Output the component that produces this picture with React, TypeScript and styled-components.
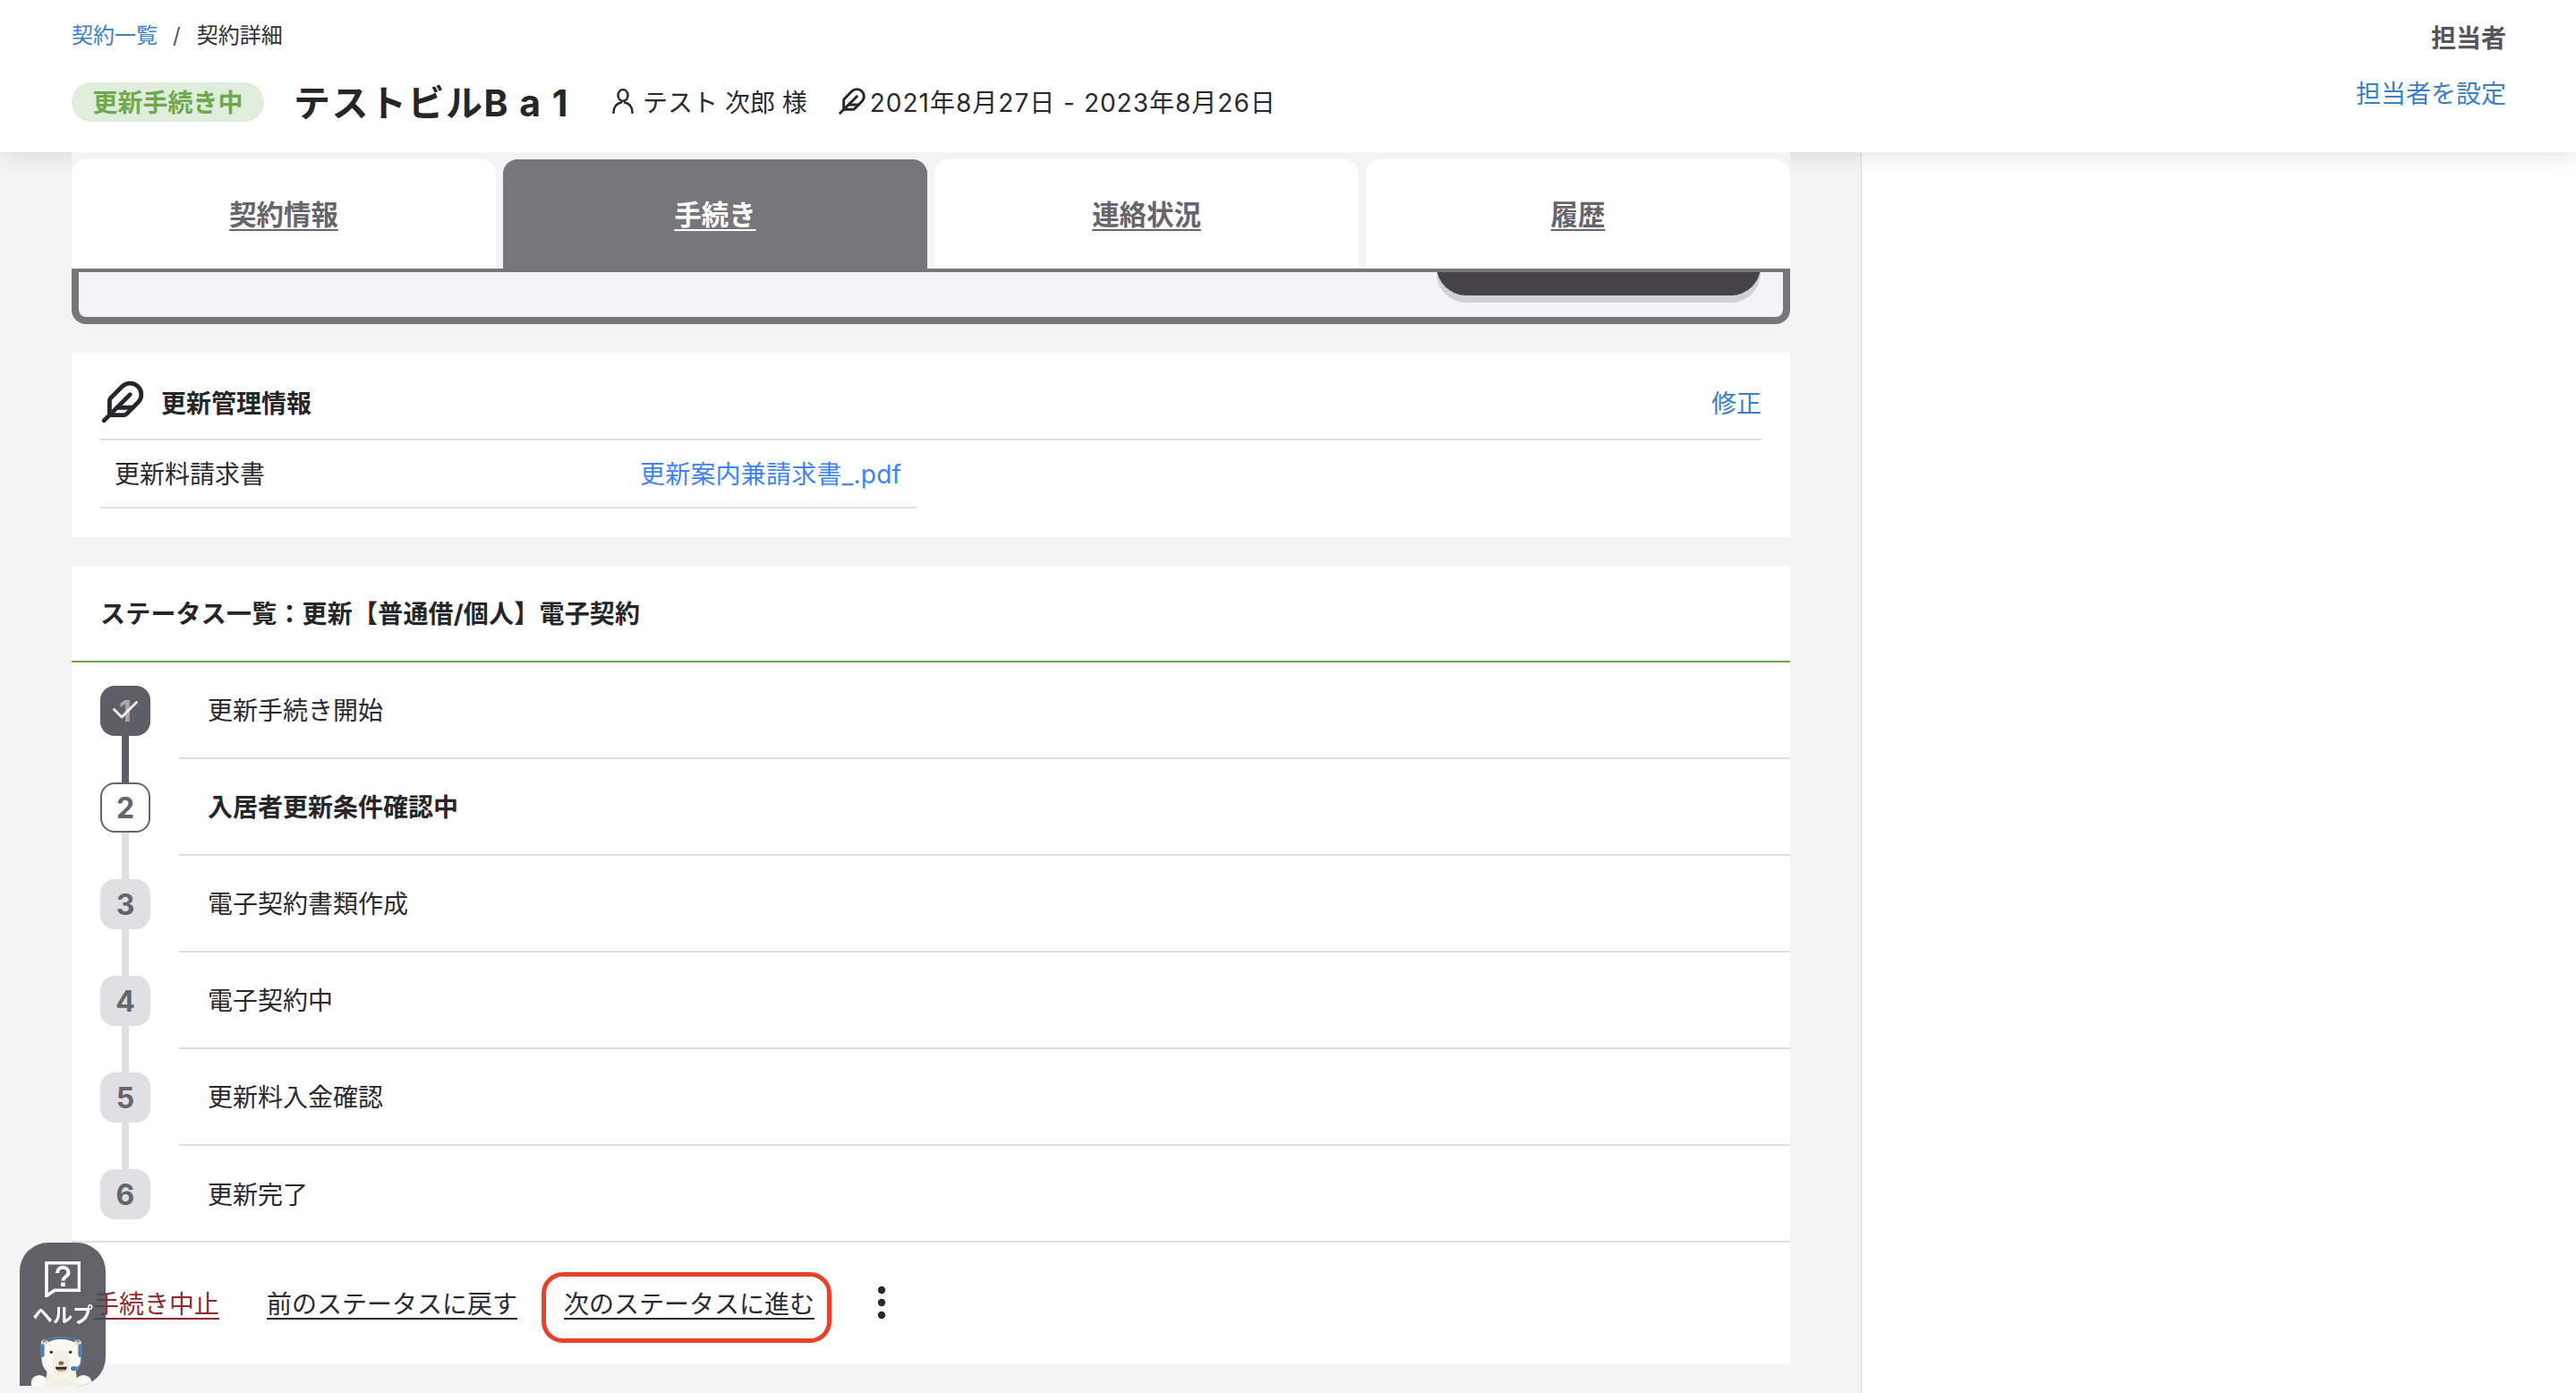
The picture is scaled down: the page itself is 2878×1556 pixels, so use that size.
import React from "react";
import styled, { createGlobalStyle } from "styled-components";
import { Feather } from "lucide-react";

const Global = createGlobalStyle`
  html, body { margin: 0; padding: 0; height: 100%; }
  body {
    background: #f4f4f4;
    font-family: "Inter", "Noto Sans CJK JP", sans-serif;
    color: #2a2a2e;
    overflow: hidden;
  }
  * { box-sizing: border-box; }
`;

const Page = styled.div`
  width: 2878px;
  height: 1556px;
  display: flex;
  flex-direction: column;
  overflow: hidden;
`;

const Header = styled.header`
  height: 170px;
  flex: none;
  background: #fff;
  display: flex;
  justify-content: space-between;
  padding: 24px 78px 0 80px;
  box-shadow: 0 2px 24px rgba(60, 60, 70, 0.16);
  position: relative;
  z-index: 1;
`;

const HeaderLeft = styled.div`
  display: flex;
  flex-direction: column;
`;

const Breadcrumb = styled.nav`
  display: flex;
  align-items: center;
  height: 32px;
  font-size: 24px;
  line-height: 32px;
  color: #2f2f33;
`;

const CrumbLink = styled.a`
  color: #3d7fc4;
`;

const CrumbSep = styled.span`
  margin: 0 18px 0 17px;
  color: #55555a;
`;

const InfoRow = styled.div`
  display: flex;
  align-items: center;
  height: 44px;
  margin-top: 36px;
`;

const StatusPill = styled.span`
  width: 215px;
  height: 44px;
  border-radius: 22px;
  background: #e0eddb;
  color: #6ea94f;
  font-size: 28px;
  font-weight: 700;
  line-height: 46px;
  text-align: center;
`;

const Title = styled.h1`
  margin: 0 0 4px 33px;
  font-size: 41px;
  font-weight: 700;
  letter-spacing: 1.5px;
  color: #26262a;
  white-space: nowrap;
`;

const Tenant = styled.span`
  display: flex;
  align-items: center;
  gap: 10px;
  margin-left: 48px;
  margin-bottom: 2px;
  font-size: 28px;
  color: #2a2a2e;
  white-space: pre;
`;

const Term = styled.span`
  display: flex;
  align-items: center;
  gap: 4px;
  margin-left: 34px;
  margin-bottom: 2px;
  font-size: 28px;
  letter-spacing: 1px;
  color: #2a2a2e;
  white-space: pre;
`;

const HeaderRight = styled.div`
  display: flex;
  flex-direction: column;
  align-items: flex-end;
`;

const OwnerLabel = styled.div`
  font-size: 28px;
  font-weight: 700;
  line-height: 38px;
  color: #55555b;
`;

const OwnerLink = styled.a`
  margin-top: 24px;
  font-size: 28px;
  line-height: 38px;
  color: #3d7fc4;
`;

const Main = styled.div`
  flex: 1;
  display: grid;
  grid-template-columns: 2080px 1fr;
  min-height: 0;
`;

const Content = styled.main`
  padding: 0 79px 0 80px;
  border-right: 1px solid #d9d9dc;
  display: flex;
  flex-direction: column;
`;

const SidePanel = styled.aside`
  background: #fff;
`;

const TabArea = styled.div`
  position: relative;
  z-index: 2;
  background: #f4f4f6;
  padding-top: 8px;
`;

const Tabs = styled.div`
  display: grid;
  grid-template-columns: repeat(4, 1fr);
  gap: 8px;
  height: 122px;
`;

const Tab = styled.a<{ $active?: boolean }>`
  display: flex;
  align-items: center;
  justify-content: center;
  border-radius: 16px 16px 0 0;
  background: ${(p) => (p.$active ? "#77767b" : "#fff")};
  color: ${(p) => (p.$active ? "#fff" : "#66656c")};
  font-size: 30.4px;
  font-weight: 700;
  padding-bottom: 2px;
  text-decoration: underline;
  text-underline-offset: 5px;
  text-decoration-thickness: 2px;
`;

const TabPanel = styled.div`
  height: 62px;
  background: #f4f4f6;
  border: 8px solid #77767b;
  border-top-width: 4px;
  border-radius: 0 0 16px 16px;
  display: flex;
  justify-content: flex-end;
  padding-right: 25px;
  overflow: hidden;
`;

const CutOffButton = styled.div`
  width: 362px;
  height: 66px;
  margin-top: -40px;
  border-radius: 36px;
  background: #45424c;
  box-shadow: 0 8px 0 #d1d1d3;
`;

const Card = styled.section<{ $top: number }>`
  margin-top: ${(p) => p.$top}px;
  background: #fff;
`;

const InfoHead = styled.div`
  margin: 0 32px;
  height: 98px;
  padding-top: 14px;
  display: flex;
  align-items: center;
  border-bottom: 2px solid #e0e0e2;
`;

const InfoTitle = styled.h2`
  margin: 0 0 0 18px;
  font-size: 28px;
  font-weight: 700;
  color: #26262a;
`;

const EditLink = styled.a`
  margin-left: auto;
  font-size: 28px;
  color: #3d7fc4;
`;

const InfoRowLine = styled.div`
  width: 912px;
  margin: 0 0 32px 32px;
  height: 76px;
  display: grid;
  grid-template-columns: 587px 1fr;
  align-items: center;
  padding: 0 0 2px 16px;
  font-size: 28px;
  border-bottom: 2px solid #e0e0e2;
`;

const FileLink = styled.a`
  color: #3f83f0;
  letter-spacing: 0.2px;
`;

const StatusHead = styled.div`
  height: 108px;
  padding: 0 32px 2px;
  display: flex;
  align-items: center;
  border-bottom: 2px solid #6fa651;
  font-size: 28px;
  font-weight: 700;
  letter-spacing: 0.2px;
  color: #26262a;
`;

const Step = styled.div`
  display: flex;
  height: 108px;
  padding-left: 32px;
`;

const Badge = styled.div<{ $state: "done" | "current" | "todo"; $line?: "dark" | "light" }>`
  position: relative;
  flex: none;
  width: 56px;
  height: 56px;
  margin-top: 26px;
  margin-right: 32px;
  border-radius: 16px;
  display: flex;
  align-items: center;
  justify-content: center;
  font-size: 32px;
  font-weight: 700;
  background: ${(p) => (p.$state === "done" ? "#5f5e66" : p.$state === "current" ? "#fff" : "#e0e0e2")};
  color: ${(p) => (p.$state === "done" ? "#a8a8ac" : "#66656c")};
  border: ${(p) => (p.$state === "current" ? "2px solid #66656c" : "none")};

  ${(p) =>
    p.$line
      ? `&::after {
    content: "";
    position: absolute;
    left: ${p.$state === "current" ? 22 : 24}px;
    top: calc(100% + ${p.$state === "current" ? 2 : 0}px);
    width: 8px;
    height: 52px;
    background: ${p.$line === "dark" ? "#5f5e66" : "#e0e0e2"};
  }`
      : ""}
`;

const CheckMark = styled.svg`
  position: absolute;
  left: 14px;
  top: 17px;
`;

const StepBody = styled.div<{ $last?: boolean; $current?: boolean }>`
  flex: 1;
  height: 108px;
  display: flex;
  align-items: center;
  padding: 0 0 2px 32px;
  font-size: 28px;
  font-weight: ${(p) => (p.$current ? 700 : 400)};
  color: ${(p) => (p.$current ? "#26262a" : "#2a2a2e")};
  border-bottom: ${(p) => (p.$last ? "none" : "2px solid #e0e0e2")};
`;

const Actions = styled.div`
  height: 138px;
  margin-top: -2px;
  border-top: 2px solid #e0e0e2;
  display: flex;
  align-items: center;
  gap: 1px;
  padding-bottom: 2px;
  font-size: 28px;
`;

const ActionLink = styled.a<{ $danger?: boolean }>`
  padding: 0 26px;
  color: ${(p) => (p.$danger ? "#8f2a2e" : "#2a2a33")};
  text-decoration: underline;
  text-underline-offset: 5px;
  text-decoration-thickness: 2px;
  white-space: nowrap;

  &:first-child {
    padding-left: 25px;
  }
`;

const NextLink = styled.a`
  height: 79px;
  margin-top: 10px;
  padding: 0 14px 10px 20px;
  display: flex;
  align-items: center;
  border: 5px solid #e8432a;
  border-radius: 24px;
  color: #2a2a33;
  text-decoration: underline;
  text-underline-offset: 5px;
  text-decoration-thickness: 2px;
  white-space: nowrap;
`;

const MoreIcon = styled.svg`
  margin-left: 50px;
`;

const Help = styled.div`
  position: fixed;
  left: 22px;
  top: 1388px;
  width: 96px;
  height: 160px;
  z-index: 5;
  border-radius: 32px 32px 32px 0;
  background: rgba(72, 70, 78, 0.85);
  display: flex;
  flex-direction: column;
  align-items: center;
  padding-top: 21px;
  overflow: hidden;
  color: #fff;
`;

const HelpLabel = styled.div`
  margin-top: 5px;
  font-size: 22.5px;
  line-height: 30px;
  font-weight: 700;
  white-space: nowrap;
`;

const Bear = styled.svg`
  margin-top: auto;
  flex: none;
`;

const steps = ["更新手続き開始", "入居者更新条件確認中", "電子契約書類作成", "電子契約中", "更新料入金確認", "更新完了"];

export default function App() {
  return (
    <Page>
      <Global />
      <Header>
        <HeaderLeft>
          <Breadcrumb>
            <CrumbLink>契約一覧</CrumbLink>
            <CrumbSep>/</CrumbSep>
            <span>契約詳細</span>
          </Breadcrumb>
          <InfoRow>
            <StatusPill>更新手続き中</StatusPill>
            <Title>テストビルB a 1</Title>
            <Tenant>
              <svg width="24" height="28" viewBox="0 0 24 28" fill="none" stroke="#26262a" strokeWidth="2.4" strokeLinecap="round">
                <ellipse cx="12" cy="7.5" rx="5.5" ry="6.4" />
                <path d="M10 15.5C5 16.5 1.6 20.5 1.4 27M14 15.5c5 1 8.4 5 8.6 11.5" />
              </svg>
              テスト 次郎 様
            </Tenant>
            <Term>
              <Feather size={32} strokeWidth={2.2} color="#26262a" />
              2021年8月27日 - 2023年8月26日
            </Term>
          </InfoRow>
        </HeaderLeft>
        <HeaderRight>
          <OwnerLabel>担当者</OwnerLabel>
          <OwnerLink>担当者を設定</OwnerLink>
        </HeaderRight>
      </Header>
      <Main>
        <Content>
          <TabArea>
            <Tabs>
              <Tab>契約情報</Tab>
              <Tab $active>手続き</Tab>
              <Tab>連絡状況</Tab>
              <Tab>履歴</Tab>
            </Tabs>
            <TabPanel>
              <CutOffButton />
            </TabPanel>
          </TabArea>
          <Card $top={32}>
            <InfoHead>
              <Feather size={50} strokeWidth={2.3} color="#26262a" />
              <InfoTitle>更新管理情報</InfoTitle>
              <EditLink>修正</EditLink>
            </InfoHead>
            <InfoRowLine>
              <span>更新料請求書</span>
              <FileLink>更新案内兼請求書_.pdf</FileLink>
            </InfoRowLine>
          </Card>
          <Card $top={32}>
            <StatusHead>ステータス一覧：更新【普通借/個人】電子契約</StatusHead>
            {steps.map((label, i) => {
              const state = i === 0 ? "done" : i === 1 ? "current" : "todo";
              return (
                <Step key={label}>
                  <Badge $state={state} $line={i === 5 ? undefined : i === 0 ? "dark" : "light"}>
                    {i + 1}
                    {i === 0 && (
                      <CheckMark width="28" height="20" viewBox="0 0 28 20" fill="none" stroke="#fff" strokeWidth="2.6" strokeLinecap="round" strokeLinejoin="round">
                        <path d="M1.5 9.5l8.5 8.5L26.5 1.5" />
                      </CheckMark>
                    )}
                  </Badge>
                  <StepBody $last={i === 5} $current={i === 1}>
                    {label}
                  </StepBody>
                </Step>
              );
            })}
            <Actions>
              <ActionLink $danger>手続き中止</ActionLink>
              <ActionLink>前のステータスに戻す</ActionLink>
              <NextLink>次のステータスに進む</NextLink>
              <MoreIcon width="10" height="38" viewBox="0 0 10 38" fill="#2a2a2e">
                <circle cx="5" cy="5" r="4.2" />
                <circle cx="5" cy="19" r="4.2" />
                <circle cx="5" cy="33" r="4.2" />
              </MoreIcon>
            </Actions>
          </Card>
        </Content>
        <SidePanel />
      </Main>
      <Help>
        <svg width="40" height="40" viewBox="0 0 40 40" fill="none" stroke="#fff">
          <path d="M2 1.8h36.5v30.5H11L2 38.5z" strokeWidth="3.6" strokeLinejoin="miter" />
          <path d="M14 13c0-8.5 12.5-8 12.5-.5 0 4.5-6 4.5-6 9" strokeWidth="4" strokeLinecap="butt" />
          <path d="M20.5 23.5v4.5" strokeWidth="4.4" />
        </svg>
        <HelpLabel>ヘルプ</HelpLabel>
        <Bear width="96" height="56.33" viewBox="-24 20 288 169">
          <ellipse cx="42" cy="178" rx="28" ry="26" fill="#fbfaf3" />
          <ellipse cx="190" cy="178" rx="28" ry="26" fill="#fbfaf3" />
          <path d="M60 189l8-50h96l8 50z" fill="#f3f0e4" />
          <circle cx="60" cy="46" r="13" fill="#e5d9bd" />
          <circle cx="170" cy="46" r="13" fill="#e5d9bd" />
          <path d="M49 92c0-40 22-60 66-60s66 20 66 60c0 40-22 64-66 64s-66-24-66-64z" fill="#fbfaf3" />
          <path d="M87 100c0-20 10-30 28-30s28 10 28 30v30c0 14-12 24-28 24s-28-10-28-24z" fill="#f1eee2" />
          <path d="M56 40c20-18 98-18 118 0" fill="none" stroke="#4f7fb8" strokeWidth="5" strokeLinecap="round" />
          <rect x="45" y="48" width="14" height="44" rx="7" fill="#4f7fb8" />
          <rect x="172" y="48" width="14" height="44" rx="7" fill="#4f7fb8" />
          <path d="M184 88c4 22-6 38-22 41" fill="none" stroke="#4f7fb8" strokeWidth="4" />
          <ellipse cx="158" cy="130" rx="11" ry="8" fill="#4f7fb8" />
          <circle cx="82" cy="75" r="5" fill="#222" />
          <circle cx="146" cy="75" r="5" fill="#222" />
          <ellipse cx="115" cy="112" rx="9" ry="6.5" fill="#7a6a58" />
          <path d="M96 124h38c0 10-8 15-19 15s-19-5-19-15z" fill="#3a2a28" />
          <path d="M102 133h26c-2 4-7 6-13 6s-11-2-13-6z" fill="#e8a898" />
        </Bear>
      </Help>
    </Page>
  );
}
